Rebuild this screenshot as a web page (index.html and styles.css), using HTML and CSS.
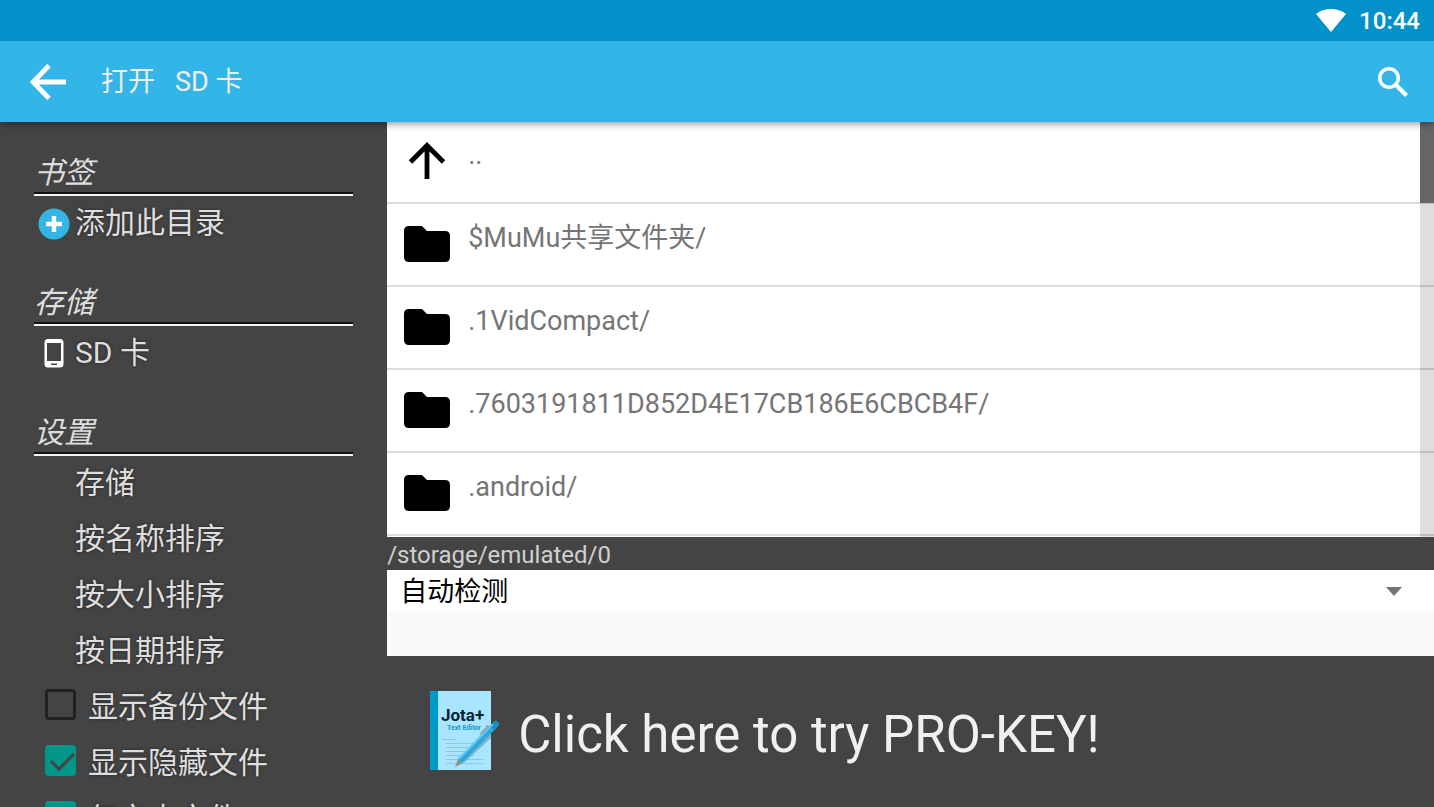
FILE: index.html
```
<!DOCTYPE html>
<html lang="zh-CN">
<head>
    <meta charset="UTF-8">
    <meta name="viewport" content="width=device-width, initial-scale=1.0">
    <title>打开 SD 卡</title>
    <link rel="stylesheet" href="styles.css">
</head>
<body>
    <div class="status-bar">
        <svg class="wifi" viewBox="0 0 30 23" aria-hidden="true">
            <path d="M15 23L0 5Q6 0 15 0T30 5Z" fill="#fff"/>
        </svg>
        <span class="clock">10:44</span>
    </div>

    <header class="toolbar">
        <button class="icon-btn" type="button" aria-label="返回">
            <svg class="back-icon" viewBox="0 0 36 36" aria-hidden="true">
                <path d="M36 18H4M19 1.5L3 18L19 34.5" fill="none" stroke="#fff" stroke-width="4.8"/>
            </svg>
        </button>
        <h1 class="title"><span>打开</span><span>SD 卡</span></h1>
        <button class="icon-btn" type="button" aria-label="搜索">
            <svg class="search-icon" viewBox="0 0 30 30" aria-hidden="true">
                <circle cx="11" cy="11" r="9.3" fill="none" stroke="#fff" stroke-width="3.4"/>
                <path d="M18 18L28.500 28.500" stroke="#fff" stroke-width="4.2"/>
            </svg>
        </button>
    </header>

    <div class="content">
        <nav class="sidebar">
            <h2 class="section-title">书签</h2>
            <button class="side-item" type="button">
                <svg class="side-icon" viewBox="0 0 32 32" aria-hidden="true">
                    <circle cx="16" cy="16" r="15.5" fill="#33b5e5"/>
                    <path d="M16 8V24M8 16H24" stroke="#fff" stroke-width="4.4"/>
                </svg>
                <span>添加此目录</span>
            </button>

            <h2 class="section-title">存储</h2>
            <button class="side-item" type="button">
                <svg class="side-icon" viewBox="0 0 32 32" aria-hidden="true">
                    <path fill="#fff" fill-rule="evenodd" d="M10 1H22Q25.500 1 25.500 4.500V26Q25.500 29.500 22 29.500H10Q6.500 29.500 6.500 26V4.500Q6.500 1 10 1ZM9 5V23H23V5ZM13 25.500V27H19V25.500Z"/>
                </svg>
                <span>SD 卡</span>
            </button>

            <h2 class="section-title">设置</h2>
            <button class="side-item no-icon" type="button"><span>存储</span></button>
            <button class="side-item no-icon" type="button"><span>按名称排序</span></button>
            <button class="side-item no-icon" type="button"><span>按大小排序</span></button>
            <button class="side-item no-icon" type="button"><span>按日期排序</span></button>
            <label class="side-item check"><input type="checkbox"><span>显示备份文件</span></label>
            <label class="side-item check"><input type="checkbox" checked><span>显示隐藏文件</span></label>
            <label class="side-item check"><input type="checkbox" checked><span>仅文本文件</span></label>
        </nav>

        <main class="browser">
            <div class="file-panel">
                <ul class="file-list">
                    <li>
                        <a class="file-row" href="#">
                            <svg class="file-icon" viewBox="0 0 46 38" aria-hidden="true">
                                <path d="M23 37V3M6.500 20L23 3.500L39.500 20" fill="none" stroke="#000" stroke-width="4.8"/>
                            </svg>
                            <span>..</span>
                        </a>
                    </li>
                    <li>
                        <a class="file-row" href="#">
                            <svg class="file-icon" viewBox="0 0 46 38" aria-hidden="true"><path d="M4 1H18L23 6H41Q46 6 46 11V32Q46 37 41 37H5Q0 37 0 32V6Q0 1 5 1Z"/></svg>
                            <span>$MuMu共享文件夹/</span>
                        </a>
                    </li>
                    <li>
                        <a class="file-row" href="#">
                            <svg class="file-icon" viewBox="0 0 46 38" aria-hidden="true"><path d="M4 1H18L23 6H41Q46 6 46 11V32Q46 37 41 37H5Q0 37 0 32V6Q0 1 5 1Z"/></svg>
                            <span>.1VidCompact/</span>
                        </a>
                    </li>
                    <li>
                        <a class="file-row" href="#">
                            <svg class="file-icon" viewBox="0 0 46 38" aria-hidden="true"><path d="M4 1H18L23 6H41Q46 6 46 11V32Q46 37 41 37H5Q0 37 0 32V6Q0 1 5 1Z"/></svg>
                            <span>.7603191811D852D4E17CB186E6CBCB4F/</span>
                        </a>
                    </li>
                    <li>
                        <a class="file-row" href="#">
                            <svg class="file-icon" viewBox="0 0 46 38" aria-hidden="true"><path d="M4 1H18L23 6H41Q46 6 46 11V32Q46 37 41 37H5Q0 37 0 32V6Q0 1 5 1Z"/></svg>
                            <span>.android/</span>
                        </a>
                    </li>
                </ul>
                <div class="scroll-track"><div class="scroll-thumb"></div></div>
            </div>

            <div class="path">/storage/emulated/0</div>

            <div class="encoding">
                <select class="encoding-select" aria-label="编码">
                    <option>自动检测</option>
                </select>
                <svg class="caret" viewBox="0 0 16 9" aria-hidden="true"><path d="M0 0H16L8 9Z" fill="#757575"/></svg>
            </div>

            <a class="promo" href="#">
                <svg class="promo-logo" viewBox="0 0 70 80" aria-hidden="true">
                    <rect x="0" y="1" width="61" height="79" fill="#a9e5ff"/>
                    <rect x="0" y="1" width="8" height="79" fill="#0099cc"/>
                    <text class="logo-name" x="11" y="31">Jota+</text>
                    <text class="logo-sub" x="17" y="40">Text Editor</text>
                    <path d="M11 49.500H25M16 53.500H53M16 57.500H50M16 61.500H46M16 65.500H44M16 69.500H53M16 73.500H53" stroke="#86cbe6" stroke-width="1"/>
                    <path d="M61 48L36 71L27 76L61 38Z" fill="#7fb5cb"/>
                    <path d="M51 45L59 36" stroke="#9aa5aa" stroke-width="4"/>
                    <path d="M25 77L28 69L33 73Z" fill="#8b9194"/>
                    <path d="M30 71L66 34" stroke="#2ba9db" stroke-width="6"/>
                    <path d="M64 36L66 34" stroke="#168fc2" stroke-width="6" stroke-linecap="round"/>
                    <path d="M29 69L63 34" stroke="#62c7ed" stroke-width="2"/>
                </svg>
                <span>Click here to try PRO-KEY!</span>
            </a>
        </main>
    </div>
</body>
</html>
```
FILE: styles.css
```
* {
    margin: 0;
    padding: 0;
    box-sizing: border-box;
}

body {
    font-family: Roboto, "Noto Sans CJK SC", sans-serif;
    background: #444;
    color: #dedede;
    height: 100vh;
    display: flex;
    flex-direction: column;
    overflow: hidden;
}

button {
    background: none;
    border: none;
    color: inherit;
    font: inherit;
    cursor: pointer;
}

a {
    color: inherit;
    text-decoration: none;
}

svg {
    display: block;
    flex-shrink: 0;
}

/* Top bars */
.status-bar {
    height: 41px;
    flex-shrink: 0;
    display: flex;
    align-items: center;
    justify-content: flex-end;
    gap: 13px;
    padding: 0 14px;
    background: #0291c8;
    z-index: 2;
}

.wifi {
    width: 30px;
    height: 23px;
}

.clock {
    color: #fff;
    font-size: 24px;
    font-weight: 500;
    line-height: 40px;
}

.toolbar {
    height: 81px;
    flex-shrink: 0;
    display: flex;
    align-items: center;
    padding: 0 26px 0 30px;
    background: #33b5e7;
    box-shadow: 0 1px 8px rgba(0, 0, 0, 0.5);
    z-index: 1;
}

.back-icon {
    width: 36px;
    height: 36px;
}

.search-icon {
    width: 30px;
    height: 30px;
}

.title {
    flex: 1;
    display: flex;
    gap: 20px;
    margin-left: 35px;
    color: #eee;
    font-size: 27px;
    font-weight: 400;
    line-height: 40px;
}

.content {
    flex: 1;
    min-height: 0;
    display: flex;
}

/* Sidebar */
.sidebar {
    width: 27%;
    padding: 0 34px;
    overflow: hidden;
}

.section-title {
    height: 74px;
    padding-top: 29px;
    border-bottom: 2px solid #f4f4f4;
    box-shadow: inset 0 -2px 0 #111;
    font-size: 30px;
    font-weight: 400;
    font-style: italic;
    line-height: 44px;
}

.side-item {
    width: 100%;
    height: 56px;
    display: flex;
    align-items: center;
    gap: 5px;
    padding-left: 4px;
    font-size: 30px;
    line-height: 44px;
    text-align: left;
    text-shadow: 0 0 3px #222;
}

.side-item span {
    padding-bottom: 2px;
}

.side-icon {
    width: 32px;
    height: 32px;
}

.no-icon {
    padding-left: 41px;
}

.check {
    gap: 12px;
    padding-left: 11px;
}

.check input {
    appearance: none;
    width: 31px;
    height: 31px;
    margin-bottom: 7px;
    border: 3px solid #212121;
    border-radius: 4px;
}

.check input:checked {
    border: none;
    background: #009688;
}

.check input:checked::before {
    content: "";
    display: block;
    width: 20px;
    height: 10px;
    margin: 7px 6px;
    border: solid #444;
    border-width: 0 0 3px 3px;
    transform: rotate(-45deg);
}

/* File list */
.browser {
    flex: 1;
    min-width: 0;
    display: flex;
    flex-direction: column;
}

.file-panel {
    flex: 1;
    min-height: 0;
    position: relative;
    overflow: hidden;
    background: #fff;
}

.file-list {
    list-style: none;
}

.file-row {
    height: 83px;
    display: flex;
    align-items: center;
    gap: 18px;
    padding: 0 0 2px 17px;
    border-bottom: 2px solid #dcdcdc;
    color: #757575;
    font-size: 27px;
    line-height: 32px;
}

.file-row span {
    padding-bottom: 12px;
}

li:first-child .file-row {
    height: 82px;
}

.file-icon {
    width: 46px;
    height: 38px;
}

.scroll-track {
    position: absolute;
    top: 0;
    right: 0;
    width: 14px;
    height: 100%;
    background: rgba(0, 0, 0, 0.13);
}

.scroll-thumb {
    height: 81px;
    background: #666;
}

.path {
    height: 33px;
    font-size: 24px;
    line-height: 36px;
    color: #d0d0d0;
}

.encoding {
    position: relative;
    padding-bottom: 45px;
    background: #fafafa;
}

.encoding-select {
    appearance: none;
    display: block;
    width: 100%;
    height: 41px;
    padding: 2px 14px 0 13px;
    border: none;
    background: #fff;
    color: #000;
    font-family: inherit;
    font-size: 27px;
}

.caret {
    position: absolute;
    top: 17px;
    right: 32px;
    width: 16px;
    height: 9px;
    pointer-events: none;
}

/* Pro key banner */
.promo {
    height: 151px;
    display: flex;
    align-items: center;
    gap: 18px;
    padding-left: 43px;
    color: #f0f0f0;
    font-size: 51px;
}

.promo span {
    padding-top: 5px;
}

.promo-logo {
    width: 70px;
    height: 80px;
    margin-bottom: 4px;
}

.logo-name {
    font-size: 17px;
    font-weight: 700;
    fill: #06262f;
}

.logo-sub {
    font-size: 7px;
    font-weight: 700;
    fill: #1695c4;
}
```
